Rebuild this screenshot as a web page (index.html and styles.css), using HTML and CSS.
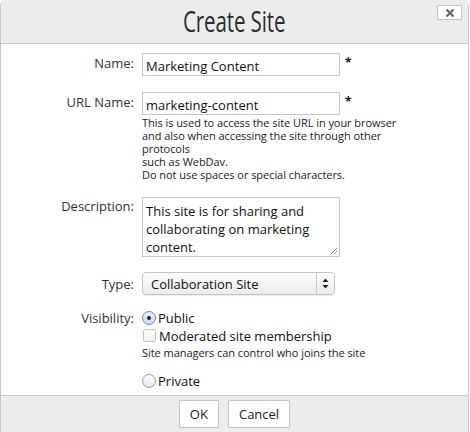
FILE: index.html
```html
<!DOCTYPE html>
<html>
<head>
<meta charset="utf-8">
<link rel="stylesheet" href="styles.css">
</head>
<body>
<div class="dialog">
  <div class="header">
    <h1 class="title"><span class="title-text">Create Site</span></h1>
    <button class="close" type="button" aria-label="Close">
      <svg width="10" height="10" viewBox="0 0 10 10"><path d="M1.5 1.5 L8.5 8.5 M8.5 1.5 L1.5 8.5" stroke="#666" stroke-width="2.2" stroke-linecap="butt"/></svg>
    </button>
  </div>
  <div class="body">
    <div class="row row-name">
      <label class="label">Name:</label>
      <div class="field">
        <div class="inline">
          <input class="text" type="text" value="Marketing Content">
          <span class="req">*</span>
        </div>
      </div>
    </div>
    <div class="row row-url">
      <label class="label">URL Name:</label>
      <div class="field">
        <div class="inline">
          <input class="text" type="text" value="marketing-content">
          <span class="req">*</span>
        </div>
        <div class="help">This is used to access the site URL in your browser<br>and also when accessing the site through other<br>protocols<br>such as WebDav.<br>Do not use spaces or special characters.</div>
      </div>
    </div>
    <div class="row row-desc">
      <label class="label">Description:</label>
      <div class="field">
        <div class="textarea">This site is for sharing and collaborating on marketing content.<svg class="grip" width="8" height="8" viewBox="0 0 8 8"><path d="M7 1 L1 7 M7 4 L4 7" stroke="#888" stroke-width="1"/></svg></div>
      </div>
    </div>
    <div class="row row-type">
      <label class="label">Type:</label>
      <div class="field">
        <div class="select">
          <span class="select-text">Collaboration Site</span>
          <span class="select-arrows">
            <svg width="7" height="11" viewBox="0 0 7 11"><path d="M3.5 0.5 L6.5 4 L0.5 4 Z M3.5 10.5 L6.5 7 L0.5 7 Z" fill="#222"/></svg>
          </span>
        </div>
      </div>
    </div>
    <div class="row row-vis">
      <label class="label">Visibility:</label>
      <div class="field">
        <div class="option"><span class="radio checked"><span class="dot"></span></span><span class="opt-text">Public</span></div>
        <div class="option sub"><span class="check"></span><span class="opt-text">Moderated site membership</span></div>
        <div class="help sub-help">Site managers can control who joins the site</div>
        <div class="option private"><span class="radio"></span><span class="opt-text">Private</span></div>
      </div>
    </div>
  </div>
  <div class="footer">
    <button class="btn" type="button">OK</button>
    <button class="btn" type="button">Cancel</button>
  </div>
</div>
</body>
</html>
```

FILE: styles.css
```css
html, body {
  margin: 0;
  padding: 0;
  background: #ffffff;
}
body {
  font-family: "Open Sans", "Liberation Sans", sans-serif;
  color: #333;
  width: 470px;
  height: 432px;
  overflow: hidden;
}
.dialog {
  width: 469px;
  height: 432px;
  border-left: 1px solid #c8c8c8;
  border-right: 1px solid #c8c8c8;
  border-radius: 6px 6px 0 0;
  background: #fff;
  display: flex;
  flex-direction: column;
  overflow: hidden;
  box-sizing: border-box;
}
.header {
  height: 43px;
  background: #ececec;
  border-bottom: 1px solid #c9c9c9;
  display: flex;
  align-items: flex-start;
  justify-content: center;
  position: relative;
  flex: none;
}
.title {
  margin: 0;
  font-weight: 400;
  font-size: 29px;
  line-height: 42px;
  color: #2d2d2d;
  text-align: center;
  letter-spacing: -0.2px;
}
.title-text {
  display: inline-block;
  transform: scaleX(0.71);
  transform-origin: center;
}
.close {
  position: absolute;
  right: 6px;
  top: 5px;
  width: 25px;
  height: 15px;
  padding: 0;
  background: #fff;
  border: 1px solid #c4c4c4;
  border-radius: 1px;
  display: flex;
  align-items: center;
  justify-content: center;
}
.body {
  flex: 1;
  padding-top: 9px;
}
.row {
  display: grid;
  grid-template-columns: 133px 1fr;
  column-gap: 8px;
}
.label {
  text-align: right;
  font-size: 13px;
  line-height: 18px;
  padding-top: 1px;
  color: #333;
}
.field {
  display: flex;
  flex-direction: column;
}
.inline {
  display: flex;
  align-items: flex-start;
}
.text {
  width: 198px;
  height: 23px;
  box-sizing: border-box;
  border: 1px solid #c6c6c6;
  padding: 2px 3px 0;
  margin: 0;
  font-family: "Open Sans", "Liberation Sans", sans-serif;
  font-size: 13px;
  color: #111;
  outline: none;
}
.req {
  font-size: 12px;
  margin-left: 5px;
  margin-top: 1px;
  color: #222;
  font-weight: 700;
}
.row-url {
  margin-top: 16px;
}
.help {
  font-size: 11px;
  line-height: 13px;
  color: #222;
  margin-top: 1px;
  letter-spacing: -0.05px;
}
.row-desc {
  margin-top: 16px;
}
.row-desc .label {
  padding-top: 0;
}
.textarea {
  position: relative;
  width: 198px;
  height: 60px;
  box-sizing: border-box;
  border: 1px solid #c6c6c6;
  padding: 4px 3px 0 3px;
  font-size: 13px;
  line-height: 18px;
  color: #111;
}
.grip {
  position: absolute;
  right: 1px;
  bottom: 1px;
}
.row-type {
  margin-top: 15px;
}
.row-type .label {
  padding-top: 3px;
}
.select {
  width: 193px;
  height: 23px;
  box-sizing: border-box;
  border: 1px solid #c4c4c4;
  border-radius: 4px;
  background: linear-gradient(#fdfdfd, #ececec);
  display: flex;
  align-items: center;
  box-shadow: 0 1px 1px rgba(0,0,0,0.08);
}
.select-text {
  flex: 1;
  font-size: 13px;
  color: #111;
  padding-left: 8px;
}
.select-arrows {
  width: 17px;
  height: 100%;
  border-left: 1px solid #c8c8c8;
  display: flex;
  align-items: center;
  justify-content: center;
}
.row-vis {
  margin-top: 14px;
}
.row-vis .label {
  padding-top: 0;
}
.option {
  display: flex;
  align-items: center;
  font-size: 13px;
  color: #111;
  height: 17px;
}
.radio {
  width: 12px;
  height: 12px;
  border-radius: 50%;
  border: 1px solid #9a9a9a;
  background: linear-gradient(#fff, #e6e6e6);
  display: flex;
  align-items: center;
  justify-content: center;
  margin-right: 2px;
}
.radio.checked {
  border-color: #5b8fd6;
  background: linear-gradient(#e8f1ff, #c6dbfa);
}
.dot {
  width: 4px;
  height: 4px;
  border-radius: 50%;
  background: #222;
}
.check {
  width: 11px;
  height: 11px;
  border: 1px solid #c2c2c2;
  border-radius: 2px;
  background: linear-gradient(#fff, #f0f0f0);
  margin-left: 1px;
  margin-right: 3px;
}
.option.sub {
  margin-top: 1px;
}
.sub-help {
  margin-top: 2px;
}
.option.private {
  margin-top: 13px;
}
.footer {
  flex: none;
  height: 37px;
  background: #ececec;
  border-top: 1px solid #c9c9c9;
  display: flex;
  justify-content: center;
  align-items: flex-start;
  gap: 9px;
  padding-top: 4px;
  box-sizing: border-box;
}
.btn {
  height: 28px;
  background: #fff;
  border: 1px solid #c4c4c4;
  border-radius: 1px;
  font-family: "Open Sans", "Liberation Sans", sans-serif;
  font-size: 13px;
  color: #222;
  padding: 0 10px;
  margin: 0;
}
```
